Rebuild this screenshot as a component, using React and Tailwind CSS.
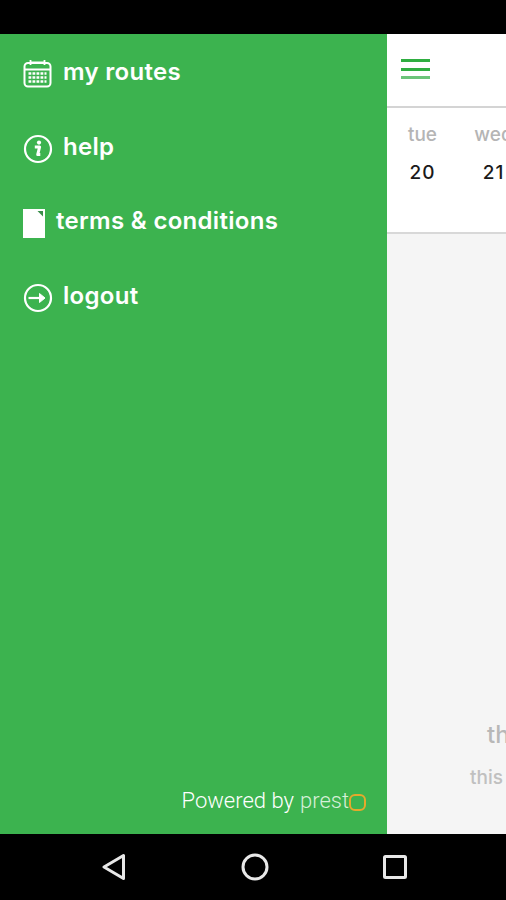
function CalendarIcon() {
  return (
    <svg width="30" height="30" viewBox="0 0 30 30" fill="none" stroke="white" strokeWidth="2">
      <rect x="1.5" y="4" width="26" height="23.5" rx="3.5" />
      <path d="M1.5 10.5h26" />
      <path d="M7.5 1v5M21.5 1v5M7.5 3.5h14" strokeWidth="1.8" />
      <path d="M5.5 14.5h18M5.5 18.5h18M5.5 22.5h18" strokeWidth="2.6" strokeDasharray="2.8 1.2" />
    </svg>
  )
}

function InfoIcon() {
  return (
    <svg width="30" height="30" viewBox="0 0 30 30" fill="none" stroke="white">
      <circle cx="15" cy="15" r="13" strokeWidth="2.2" />
      <circle cx="16" cy="8.6" r="2.1" fill="white" stroke="none" />
      <path d="M11.8 13h4.8l-1.9 7.6h2.6" strokeWidth="3" strokeLinejoin="round" />
    </svg>
  )
}

function DocIcon() {
  return (
    <svg width="22" height="29" viewBox="0 0 22 29">
      <path d="M0 0H22V29H0Z" fill="white" />
      <path d="M14.5 2H20V7.5Z" fill="#3a8f4a" />
    </svg>
  )
}

function LogoutIcon() {
  return (
    <svg width="30" height="30" viewBox="0 0 30 30" fill="none" stroke="white">
      <circle cx="15" cy="15" r="13" strokeWidth="2.2" />
      <path d="M5.5 15h15" strokeWidth="2.2" />
      <path d="M16.5 10.5l5.5 4.5-5.5 4.5Z" fill="white" strokeWidth="1" strokeLinejoin="round" />
    </svg>
  )
}

function MenuRow({ icon, label, gap }) {
  return (
    <div className={`h-[74.6px] flex items-center ${gap}`}>
      <div className="w-[30px] flex shrink-0">{icon}</div>
      <span className="text-[24px] leading-none font-semibold tracking-[0.3px] text-white pb-1">{label}</span>
    </div>
  )
}

export default function App() {
  return (
    <div className="w-[506px] h-[900px] bg-black flex flex-col overflow-hidden font-['Inter',sans-serif]">
      <div className="h-[34px] shrink-0 bg-black"></div>

      <div className="flex-1 flex min-h-0">
        {/* Drawer */}
        <div className="w-[387px] shrink-0 bg-[#3cb34f] flex flex-col pl-[23px] pt-[3px]">
          <MenuRow icon={<CalendarIcon />} label="my routes" gap="gap-[10px]" />
          <MenuRow icon={<InfoIcon />} label="help" gap="gap-[10px]" />
          <MenuRow icon={<DocIcon />} label="terms & conditions" gap="gap-[3px]" />
          <MenuRow icon={<LogoutIcon />} label="logout" gap="gap-[10px]" />

          <div className="mt-auto mb-[22px] mr-[21px] flex items-center justify-end text-[22px] leading-none font-light font-['Roboto',sans-serif]">
            <span className="text-white">Powered by</span>
            <span className="ml-[6px] text-[#d6efd8]">prest</span>
            <span className="w-[17px] h-[17px] mt-[3px] rounded-[6px] border-[2.5px] border-[#e5a92c]"></span>
          </div>
        </div>

        {/* Page behind the drawer */}
        <div className="flex-1 min-w-0 flex flex-col bg-white overflow-hidden">
          <div className="h-[74px] shrink-0 border-b-2 border-[#d4d4d4] flex items-center pl-[14px] pb-[2px]">
            <div className="w-[29px] flex flex-col gap-[5.5px]">
              <div className="h-[3px] bg-[#2fae41]"></div>
              <div className="h-[3px] bg-[#2fae41]"></div>
              <div className="h-[3px] bg-[#6cc47a]"></div>
            </div>
          </div>

          <div className="h-[126px] shrink-0 border-b-2 border-[#d8d8d8] flex items-start pt-[17px] whitespace-nowrap">
            <div className="w-[71px] shrink-0 flex flex-col items-center gap-[17px]">
              <span className="text-[19px] leading-[20px] font-medium text-[#b5b5b5]">tue</span>
              <span className="text-[19px] leading-[22px] font-medium tracking-[1px] text-[#1a1a1a]">20</span>
            </div>
            <div className="w-[71px] shrink-0 flex flex-col items-center gap-[17px]">
              <span className="text-[19px] leading-[20px] font-medium text-[#b5b5b5]">wed</span>
              <span className="text-[19px] leading-[22px] font-medium tracking-[1px] text-[#1a1a1a]">21</span>
            </div>
          </div>

          <div className="flex-1 bg-[#f5f5f5] pt-[486px] pl-[83px] whitespace-nowrap">
            <div className="pl-[17px] text-[24px] leading-[30px] font-medium text-[#b8b8b8]">th</div>
            <div className="mt-[17px] text-[19px] leading-[22px] font-medium text-[#c0c0c0]">this</div>
          </div>
        </div>
      </div>

      {/* Android nav bar */}
      <div className="h-[66px] shrink-0 bg-black flex items-center justify-center pl-[3px]">
        <div className="w-[305px] flex items-center justify-between">
          <svg width="24" height="28" viewBox="0 0 24 28" fill="none" stroke="#e8e8e8" strokeWidth="3" strokeLinejoin="round">
            <path d="M21.5 2.5V25.5L2 14Z" />
          </svg>
          <svg width="28" height="28" viewBox="0 0 28 28" fill="none" stroke="#e8e8e8" strokeWidth="3">
            <circle cx="14" cy="14" r="12" />
          </svg>
          <svg width="24" height="24" viewBox="0 0 24 24" fill="none" stroke="#e8e8e8" strokeWidth="3" strokeLinejoin="round">
            <rect x="1.5" y="1.5" width="21" height="21" rx="1" />
          </svg>
        </div>
      </div>
    </div>
  )
}
